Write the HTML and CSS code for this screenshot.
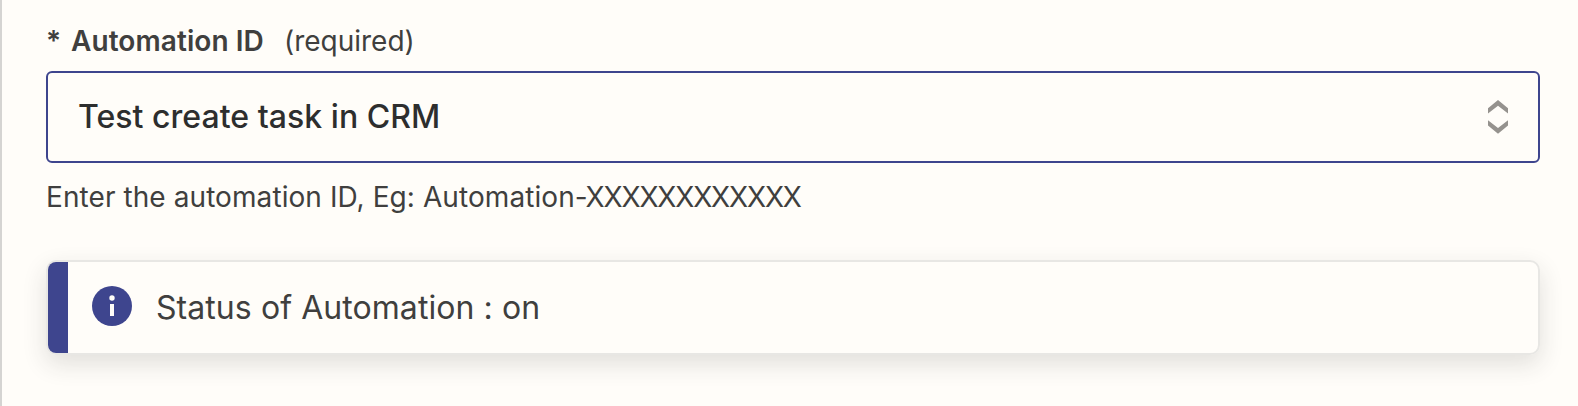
FILE: index.html
```html
<!DOCTYPE html>
<html lang="en">
<head>
<meta charset="utf-8">
<title>Automation ID</title>
<link rel="stylesheet" href="styles.css">
</head>
<body>
<main class="panel">
  <div class="label"><span class="star">*</span><span class="name">Automation ID</span><span class="required">(required)</span></div>
  <div class="select">
    <span class="value">Test create task in CRM</span>
    <svg class="chevrons" width="20" height="34" viewBox="0 0 20 34"><path d="M0 8.300 10 0l10 8.300v5.200L10 5.700 0 13.500zM0 20.300l10 7.800 10-7.800v5.200L10 33.800 0 25.500z"/></svg>
  </div>
  <p class="help">Enter the automation ID, Eg: Automation<span class="mask">-XXXXXXXXXXXX</span></p>
  <div class="alert">
    <div class="accent"></div>
    <svg class="info" width="40" height="40" viewBox="0 0 40 40"><circle class="disc" cx="20" cy="20" r="20"/><circle cx="20" cy="12" r="2.700"/><path d="M18 18h4v12h-4z"/></svg>
    <span class="message">Status of Automation : on</span>
  </div>
</main>
</body>
</html>
```
FILE: styles.css
```css
* {
  box-sizing: border-box;
}

body {
  margin: 0;
  background: #fffdf9;
  color: #403f3e;
  font-family: Inter, "Liberation Sans", sans-serif;
}

.panel {
  height: 406px;
  padding: 21px 38px 0 44px;
  border-left: 2px solid #d5d4d2;
  overflow: hidden;
}

.label {
  display: flex;
  height: 40px;
  margin-bottom: 10px;
  font-size: 28px;
  line-height: 40px;
  white-space: pre;
}

.star,
.name {
  font-weight: 600;
}

.star {
  width: 25px;
}

.name {
  margin-right: 20px;
  letter-spacing: 0.08px;
}

.select {
  display: flex;
  align-items: center;
  justify-content: space-between;
  height: 92px;
  padding: 0 30px 0 30px;
  border: 2px solid #3e458e;
  border-radius: 6px;
}

.value {
  color: #2d2e2e;
  font-size: 32px;
  font-weight: 500;
  line-height: 40px;
  letter-spacing: 0.04px;
}

.chevrons {
  fill: #95928e;
}

.help {
  height: 40px;
  margin: 14px 0 43px;
  font-size: 28px;
  line-height: 40px;
  letter-spacing: 0.08px;
}

.mask {
  letter-spacing: -1.17px;
}

.alert {
  display: flex;
  height: 95px;
  border: 2px solid #e8e7e4;
  border-radius: 10px;
  overflow: hidden;
  box-shadow: 0 9px 24px rgba(45, 46, 46, 0.14);
}

.accent {
  width: 20px;
  margin-right: 24px;
  background: #3e458e;
}

.info {
  margin: 24px 24px 0 0;
  fill: #fffdf9;
}

.disc {
  fill: #3e458e;
}

.message {
  margin-top: 26px;
  font-size: 32px;
  line-height: 40px;
  letter-spacing: 0.07px;
}
```
